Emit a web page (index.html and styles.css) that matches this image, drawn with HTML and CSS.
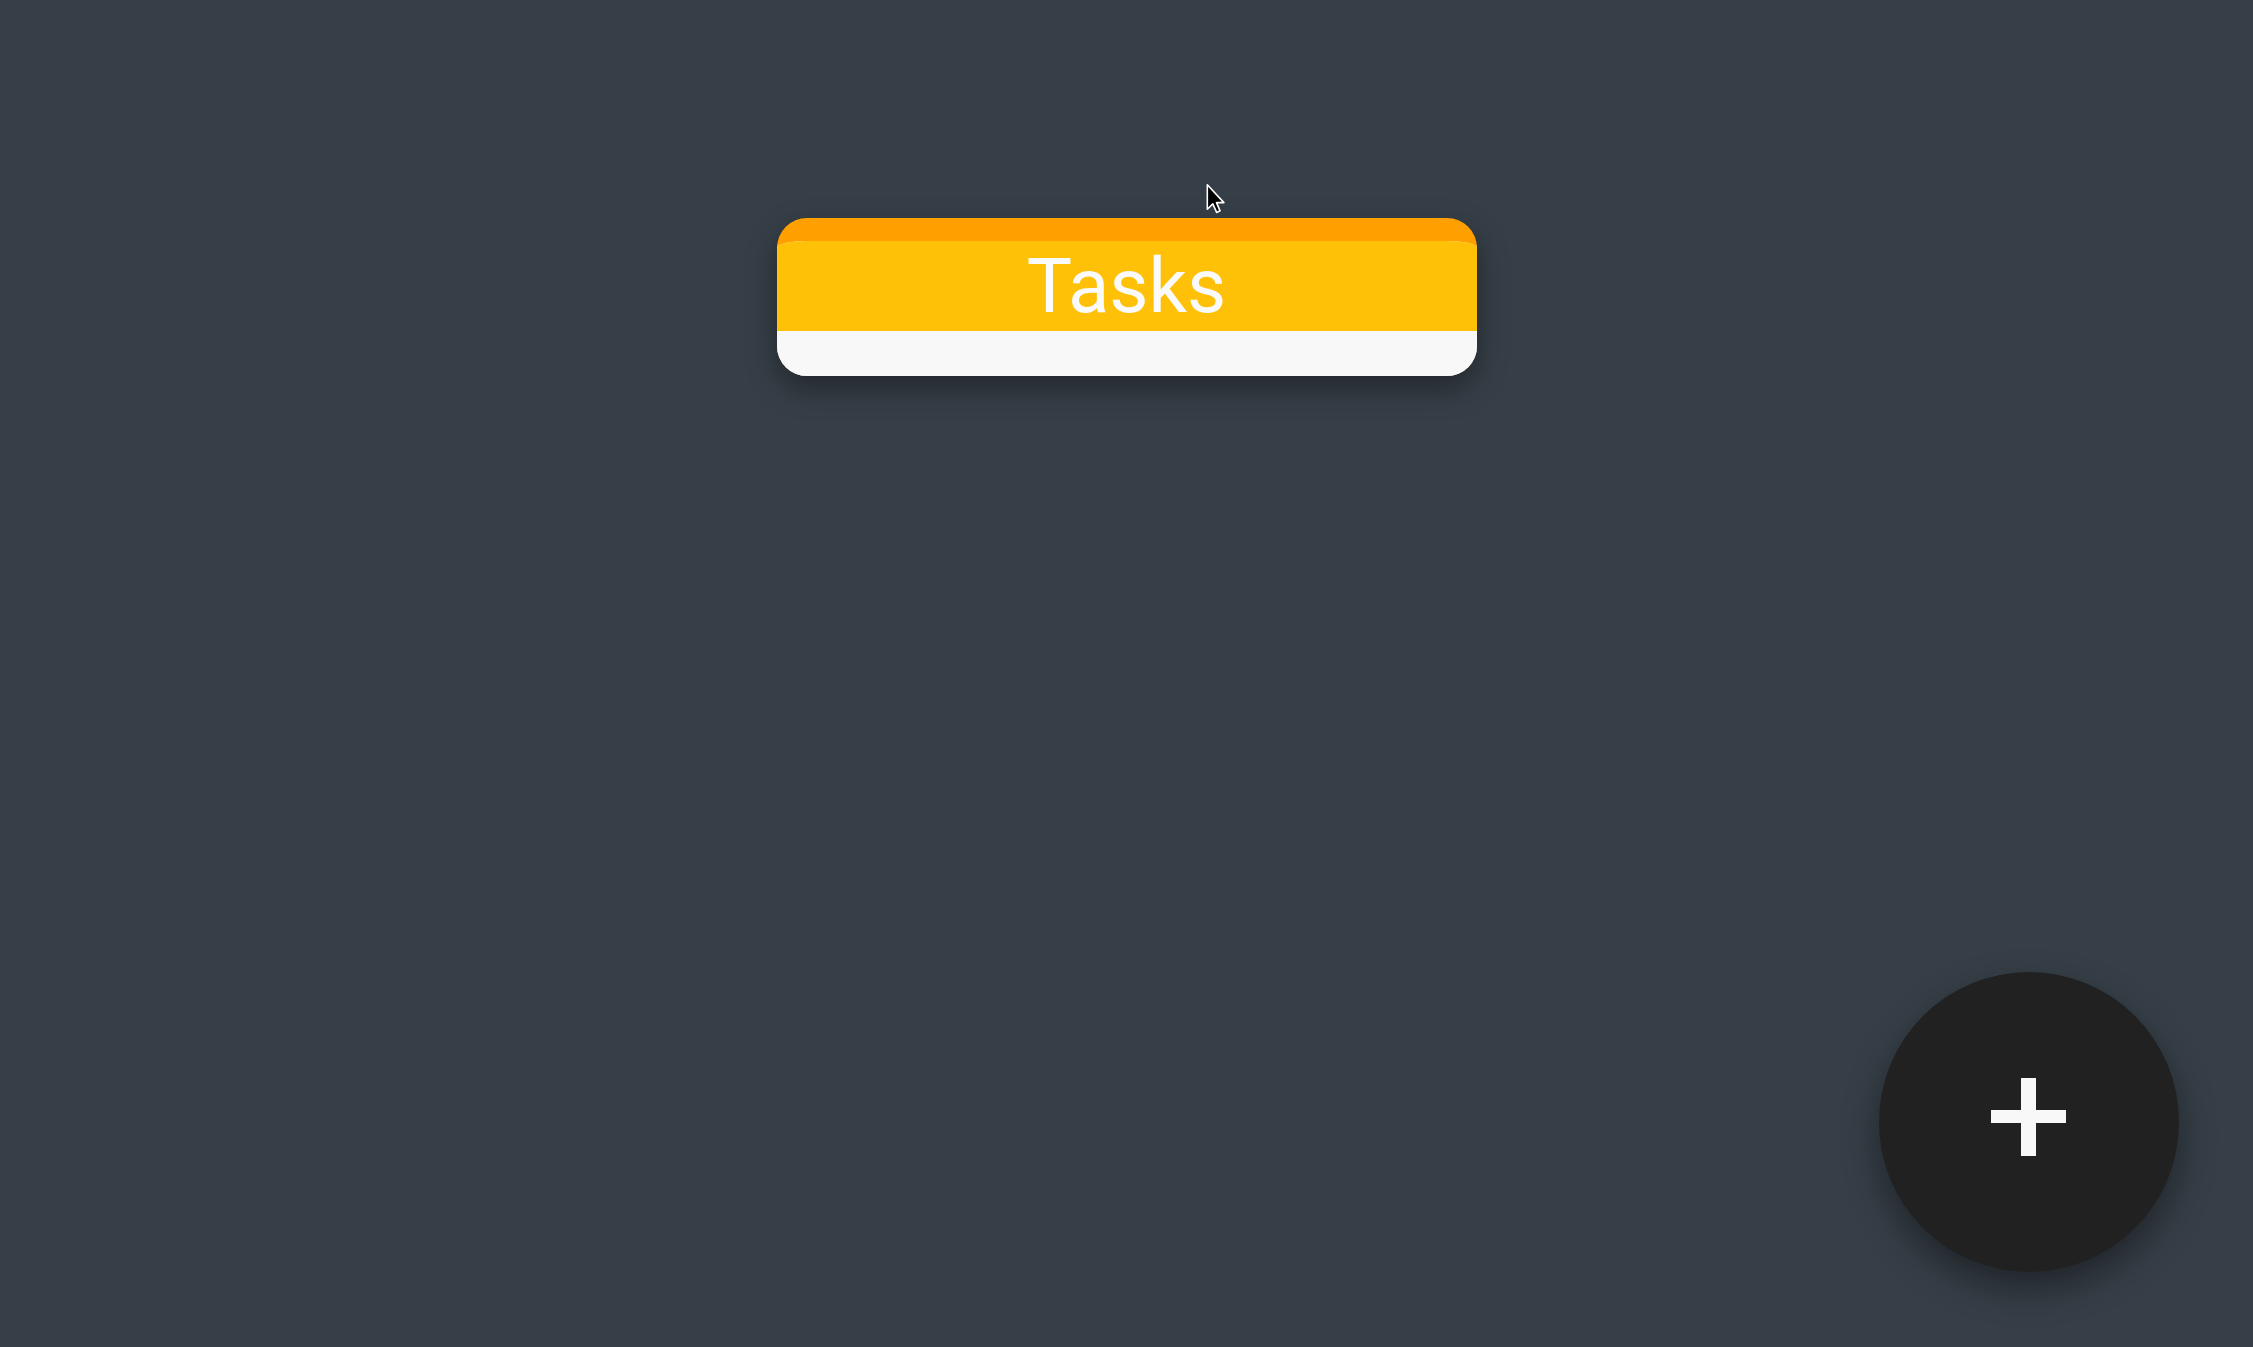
FILE: index.html
```html
<!DOCTYPE html>
<html lang="en">
<head>
<meta charset="utf-8">
<title>Tasks</title>
<link rel="stylesheet" href="styles.css">
</head>
<body>
<main class="board">
  <section class="list-card">
    <header class="list-card__head">
      <h1 class="list-card__title">Tasks</h1>
    </header>
    <div class="list-card__body"></div>
  </section>
</main>
<button class="fab" aria-label="Add">
  <svg class="fab__icon" width="76" height="80" viewBox="0 0 76 80">
    <rect x="0" y="32" width="75" height="13" fill="#f8f8f8"/>
    <rect x="30" y="0" width="15" height="78" fill="#f8f8f8"/>
  </svg>
</button>
<svg class="cursor" width="20" height="30" viewBox="0 0 12 19">
  <path d="M0.5 0.5 L0.5 16 L4 12.6 L6.4 18 L8.6 17 L6.3 11.8 L11 11.8 Z" fill="#000" stroke="#fff" stroke-width="1" stroke-linejoin="round"/>
</svg>
</body>
</html>
```

FILE: styles.css
```css
html, body {
  margin: 0;
  padding: 0;
  height: 100%;
}
body {
  background: #363f47;
  font-family: Roboto, "Noto Sans", sans-serif;
  overflow: hidden;
}
.board {
  display: flex;
  justify-content: center;
  padding-top: 218px;
}
.list-card {
  width: 700px;
  border-top: 23px solid #ffa000;
  border-radius: 30px;
  overflow: hidden;
  background: #f8f8f8;
  box-shadow: 0 12px 30px rgba(0, 0, 0, 0.38);
}
.list-card__head {
  background: #ffc107;
  height: 90px;
  display: flex;
  justify-content: center;
}
.list-card__title {
  margin: 0;
  font-size: 76px;
  font-weight: 400;
  line-height: 90px;
  color: #fafafa;
}
.list-card__body {
  height: 45px;
  background: #f8f8f8;
}
.fab {
  position: fixed;
  right: 74px;
  bottom: 75px;
  width: 300px;
  height: 300px;
  border: 0;
  border-radius: 50%;
  background: #212121;
  box-shadow: 0 16px 36px rgba(0, 0, 0, 0.42);
  display: flex;
  align-items: center;
  justify-content: center;
  padding: 0 0 8px 0;
  cursor: pointer;
}
.fab__icon {
  display: block;
}
.cursor {
  position: fixed;
  left: 1206px;
  top: 184px;
}
```
